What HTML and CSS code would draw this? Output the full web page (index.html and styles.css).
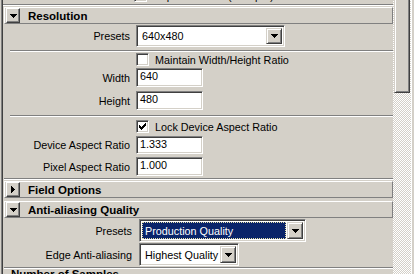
FILE: index.html
```html
<!DOCTYPE html>
<html lang="en">
<head>
    <meta charset="UTF-8">
    <meta name="viewport" content="width=device-width, initial-scale=1.0">
    <title>Render Settings</title>
    <link rel="stylesheet" href="styles.css">
</head>
<body>

<div class="window">
    <div class="panel">

        <!-- end of the section above -->
        <div class="tail">
            <div class="form-row tail-row">
                <span></span>
                <span class="check-line"><span class="checkbox"></span><span>Depth Channel (Z Depth)</span></span>
            </div>
        </div>
        <div class="sep sep-top"></div>

        <!-- Resolution -->
        <div class="frame">
            <div class="frame-head">
                <span class="toggle">
                    <svg width="7" height="4" viewBox="0 0 7 4"><path d="M0 0h7v1h-1v1h-1v1h-1v1h-1v-1h-1v-1h-1v-1h-1z"/></svg>
                </span>
                <span class="frame-title">Resolution</span>
            </div>
            <div class="frame-body res-body">
                <div class="form-row r-presets">
                    <span class="lbl">Presets</span>
                    <div class="combo combo-res">
                        <span class="combo-text">640x480</span>
                        <span class="combo-btn">
                            <svg width="7" height="4" viewBox="0 0 7 4"><path d="M0 0h7v1h-1v1h-1v1h-1v1h-1v-1h-1v-1h-1v-1h-1z"/></svg>
                        </span>
                    </div>
                </div>
                <div class="sep sep-1"></div>
                <div class="form-row r-maintain">
                    <span></span>
                    <span class="check-line"><span class="checkbox"></span><span>Maintain Width/Height Ratio</span></span>
                </div>
                <div class="form-row r-width">
                    <span class="lbl">Width</span>
                    <div class="field">640</div>
                </div>
                <div class="form-row r-height">
                    <span class="lbl">Height</span>
                    <div class="field">480</div>
                </div>
                <div class="sep sep-2"></div>
                <div class="form-row r-lock">
                    <span></span>
                    <span class="check-line">
                        <span class="checkbox">
                            <svg width="7" height="7" viewBox="0 0 7 7"><path d="M6 0h1v1h-1zM5 1h2v1h-2zM0 2h1v1h-1zM4 2h3v1h-3zM0 3h2v1h-2zM3 3h3v1h-3zM0 4h5v1h-5zM1 5h3v1h-3zM2 6h1v1h-1z"/></svg>
                        </span>
                        <span>Lock Device Aspect Ratio</span>
                    </span>
                </div>
                <div class="form-row r-device">
                    <span class="lbl">Device Aspect Ratio</span>
                    <div class="field field-short">1.333</div>
                </div>
                <div class="form-row r-pixel">
                    <span class="lbl">Pixel Aspect Ratio</span>
                    <div class="field">1.000</div>
                </div>
            </div>
        </div>

        <!-- Field Options (closed) -->
        <div class="frame closed">
            <div class="frame-head">
                <span class="toggle">
                    <svg width="4" height="7" viewBox="0 0 4 7"><path d="M0 0v7h1v-1h1v-1h1v-1h1v-1h-1v-1h-1v-1h-1v-1z"/></svg>
                </span>
                <span class="frame-title">Field Options</span>
            </div>
        </div>

        <!-- Anti-aliasing Quality -->
        <div class="frame frame-aa">
            <div class="frame-head">
                <span class="toggle">
                    <svg width="7" height="4" viewBox="0 0 7 4"><path d="M0 0h7v1h-1v1h-1v1h-1v1h-1v-1h-1v-1h-1v-1h-1z"/></svg>
                </span>
                <span class="frame-title">Anti-aliasing Quality</span>
            </div>
            <div class="frame-body aa-body">
                <div class="form-row aa-row">
                    <span class="lbl">Presets</span>
                    <div class="combo combo-quality">
                        <span class="combo-text"><span class="picked">Production Quality</span></span>
                        <span class="combo-btn">
                            <svg width="7" height="4" viewBox="0 0 7 4"><path d="M0 0h7v1h-1v1h-1v1h-1v1h-1v-1h-1v-1h-1v-1h-1z"/></svg>
                        </span>
                    </div>
                </div>
                <div class="form-row aa-row">
                    <span class="lbl">Edge Anti-aliasing</span>
                    <div class="combo combo-edge">
                        <span class="combo-text">Highest Quality</span>
                        <span class="combo-btn">
                            <svg width="7" height="4" viewBox="0 0 7 4"><path d="M0 0h7v1h-1v1h-1v1h-1v1h-1v-1h-1v-1h-1v-1h-1z"/></svg>
                        </span>
                    </div>
                </div>
            </div>
        </div>

        <!-- next sub section, cut off by the window -->
        <div class="sub-title">Number of Samples</div>
    </div>

    <div class="vscroll">
        <div class="thumb"></div>
    </div>
</div>

</body>
</html>
```

FILE: styles.css
```css
* {
    box-sizing: border-box;
}

body {
    margin: 0;
    width: 414px;
    height: 274px;
    overflow: hidden;
    background: #d4d0c8;
    font-family: "Liberation Sans", Arial, sans-serif;
    font-size: 10.8px;
    color: #000;
}

.window {
    display: flex;
    height: 274px;
    padding-left: 1px;
    border-right: 1px solid #fff;
    width: 412px;
}

.panel {
    width: 392px;
    border-left: 1px solid #808080;
    box-shadow: inset 1px 0 #404040;
    overflow: hidden;
}

/* etched separator lines */
.sep {
    height: 2px;
    border-top: 1px solid #808080;
    border-bottom: 1px solid #fff;
    margin-left: 6px;
}

.sep-top {
    margin-left: 1px;
}

.tail {
    height: 4px;
    overflow: hidden;
}

.tail-row {
    margin-top: -11px;
}

/* collapsible frame */
.frame {
    margin-left: 2px;
}

.frame-head {
    display: flex;
    align-items: center;
    height: 17px;
    margin-top: 1px;
    padding-left: 1px;
    border: 1px solid;
    border-color: #fff #808080 #808080 #fff;
}

.toggle {
    display: flex;
    align-items: center;
    justify-content: center;
    width: 14px;
    height: 15px;
    border: 1px solid;
    border-color: #fff #404040 #404040 #fff;
    box-shadow: inset -1px -1px #808080;
}

.frame-title {
    margin-left: 8px;
    font-weight: bold;
    font-size: 11.5px;
}

.frame-body {
    border-bottom: 1px solid #808080;
    box-shadow: 0 1px #fff;
    padding-bottom: 2px;
}

.closed + .frame .frame-head {
    margin-top: 3px;
}

.frame.closed .frame-head {
    margin-top: 2px;
}

/* form rows */
.form-row {
    display: grid;
    grid-template-columns: 126px auto;
    column-gap: 6px;
    align-items: center;
    justify-content: start;
}

.lbl {
    text-align: right;
    white-space: nowrap;
}

.r-presets { margin-top: 1px; }
.sep-1 { margin-top: 3px; }
.r-maintain { margin-top: 1px; }
.r-width { margin-top: 2px; }
.r-height { margin-top: 4px; }
.sep-2 { margin-top: 5px; }
.r-lock { margin-top: 3px; }
.r-device { margin-top: 3px; }
.r-pixel { margin-top: 3px; }

.aa-body {
    padding-top: 1px;
    padding-bottom: 1px;
}

.aa-row {
    grid-template-columns: 128px auto;
    column-gap: 7px;
}

.aa-row + .aa-row {
    margin-top: 1px;
}

.check-line {
    display: flex;
    align-items: center;
    gap: 6px;
    height: 13px;
}

.checkbox {
    display: flex;
    align-items: center;
    justify-content: center;
    width: 13px;
    height: 13px;
    background: #fff;
    border: 1px solid;
    border-color: #808080 #fff #fff #808080;
    box-shadow: inset 1px 1px #404040, inset -1px -1px #d4d0c8;
}

/* sunken text field */
.field {
    width: 67px;
    height: 19px;
    padding: 0 3px;
    line-height: 15px;
    background: #fff;
    border: 1px solid;
    border-color: #808080 #fff #fff #808080;
    box-shadow: inset 1px 1px #404040, inset -1px -1px #d4d0c8;
}

.field-short {
    height: 18px;
    line-height: 14px;
}

/* drop down */
.combo {
    display: flex;
    height: 22px;
    padding: 2px;
    background: #fff;
    border: 1px solid;
    border-color: #808080 #fff #fff #808080;
    box-shadow: inset 1px 1px #404040, inset -1px -1px #d4d0c8;
}

.combo-res {
    width: 149px;
}

.combo-quality {
    width: 167px;
    height: 23px;
}

.combo-edge {
    width: 100px;
    height: 23px;
}

.combo-text {
    flex: 1;
    display: flex;
    align-items: center;
    padding-left: 3px;
    white-space: nowrap;
}

.picked {
    flex: 1;
    align-self: stretch;
    display: flex;
    align-items: center;
    margin-left: -3px;
    margin-right: 1px;
    padding-left: 2px;
    background: #0a246a;
    color: #fff;
    border: 1px dotted #e6e0a8;
}

.combo-btn {
    display: flex;
    align-items: center;
    justify-content: center;
    width: 16px;
    background: #d4d0c8;
    border: 1px solid;
    border-color: #d4d0c8 #404040 #404040 #d4d0c8;
    box-shadow: inset 1px 1px #fff, inset -1px -1px #808080;
}

.sub-title {
    margin: 0 0 0 9px;
    font-weight: bold;
    font-size: 11.5px;
    line-height: 13px;
}

/* vertical scroll bar */
.vscroll {
    width: 18px;
    padding: 0 1px;
    background: repeating-conic-gradient(#fff 0 25%, #d4d0c8 0 50%);
    background-size: 2px 2px;
}

.thumb {
    height: 93px;
    background: #d4d0c8;
    border: 1px solid;
    border-color: #d4d0c8 #404040 #404040 #d4d0c8;
    border-top: none;
    box-shadow: inset 1px 0 #fff, inset -1px -1px #808080;
}
```
